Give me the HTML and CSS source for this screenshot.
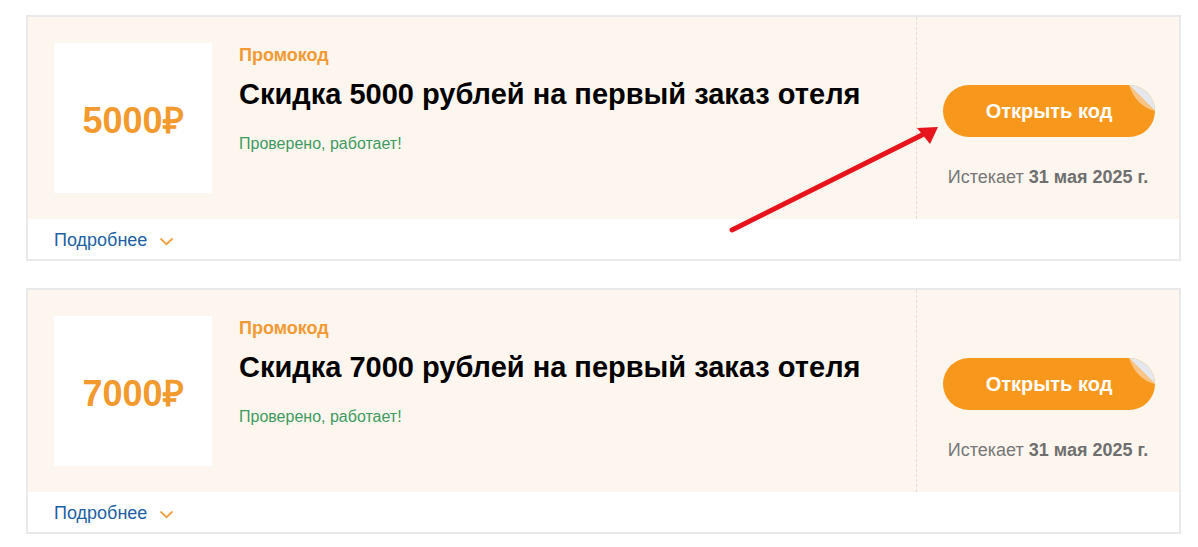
FILE: index.html
```html
<!DOCTYPE html>
<html lang="ru">
<head>
<meta charset="utf-8">
<title>Промокоды</title>
<link rel="stylesheet" href="styles.css">
</head>
<body>
<div class="page">
  <div class="card">
    <div class="card-main">
      <div class="card-info">
        <div class="amount-box"><span class="amount">5000₽</span></div>
        <div class="text-col">
          <div class="label">Промокод</div>
          <h2 class="title">Скидка 5000 рублей на первый заказ отеля</h2>
          <div class="verified">Проверено, работает!</div>
        </div>
      </div>
      <div class="card-action">
        <button class="open-btn">Открыть код
          <svg class="peel" viewBox="0 0 26 26" width="26" height="26">
            <path d="M0,0 A26,26 0 0 1 26,26 Z" fill="#e4e8ec"/>
            <path d="M0,0 L26,26 Q7,21 0,0 Z" fill="#f9c485"/>
          </svg>
        </button>
        <div class="expires">Истекает <b>31 мая 2025 г.</b></div>
      </div>
    </div>
    <div class="card-foot"><span class="more">Подробнее</span>
      <svg class="chev" viewBox="0 0 15 9" width="15" height="9"><path d="M1.5,1.5 L7.5,7.2 L13.5,1.5" fill="none" stroke="#f0a040" stroke-width="1.8"/></svg>
    </div>
  </div>

  <div class="card">
    <div class="card-main">
      <div class="card-info">
        <div class="amount-box"><span class="amount">7000₽</span></div>
        <div class="text-col">
          <div class="label">Промокод</div>
          <h2 class="title">Скидка 7000 рублей на первый заказ отеля</h2>
          <div class="verified">Проверено, работает!</div>
        </div>
      </div>
      <div class="card-action">
        <button class="open-btn">Открыть код
          <svg class="peel" viewBox="0 0 26 26" width="26" height="26">
            <path d="M0,0 A26,26 0 0 1 26,26 Z" fill="#e4e8ec"/>
            <path d="M0,0 L26,26 Q7,21 0,0 Z" fill="#f9c485"/>
          </svg>
        </button>
        <div class="expires">Истекает <b>31 мая 2025 г.</b></div>
      </div>
    </div>
    <div class="card-foot"><span class="more">Подробнее</span>
      <svg class="chev" viewBox="0 0 15 9" width="15" height="9"><path d="M1.5,1.5 L7.5,7.2 L13.5,1.5" fill="none" stroke="#f0a040" stroke-width="1.8"/></svg>
    </div>
  </div>

  <svg class="pointer" width="1198" height="547" viewBox="0 0 1198 547">
    <line x1="732" y1="230" x2="922" y2="135" stroke="#e8141b" stroke-width="5" stroke-linecap="round"/>
    <polygon points="917,128 938,127 930,144" fill="#e8141b"/>
  </svg>
</div>
</body>
</html>
```
FILE: styles.css
```css
* { box-sizing: border-box; }
html, body { margin: 0; padding: 0; background: #fff; }
body { font-family: "Liberation Sans", Arial, sans-serif; }

.page {
  position: relative;
  padding: 15px 0 0 26px;
  width: 1198px;
  height: 547px;
}

.card {
  width: 1155px;
  border: 2px solid #e9e9e9;
  margin-bottom: 27px;
  background: #fff;
}

.card-main {
  display: flex;
  height: 202px;
  background: #fdf6ee;
}

.card-info {
  flex: 1;
  display: flex;
  gap: 27px;
  padding: 26px;
}

.amount-box {
  width: 158px;
  height: 150px;
  background: #fff;
  display: flex;
  align-items: center;
  justify-content: center;
}

.amount {
  color: #f29a2e;
  font-weight: bold;
  font-size: 36px;
  padding-top: 2px;
}

.text-col { padding-top: 2px; }

.label {
  color: #f29a33;
  font-weight: bold;
  font-size: 18px;
  line-height: 20px;
}

.title {
  margin: 12px 0 0;
  color: #000;
  font-size: 29px;
  line-height: 34px;
  font-weight: bold;
}

.verified {
  margin-top: 24px;
  color: #3e9a5f;
  font-size: 16px;
  line-height: 18px;
}

.card-action {
  width: 263px;
  border-left: 1px dashed #e2dcd4;
  display: flex;
  flex-direction: column;
  align-items: center;
  padding-top: 68px;
}

.open-btn {
  position: relative;
  width: 212px;
  height: 52px;
  border: 0;
  border-radius: 26px;
  background: #f7981d;
  color: #fff;
  font-family: "Liberation Sans", Arial, sans-serif;
  font-weight: bold;
  font-size: 20px;
  padding: 0;
  margin-right: -2px;
}

.peel {
  position: absolute;
  top: 0;
  right: 0;
  display: block;
}

.expires {
  margin-top: 30px;
  color: #777;
  font-size: 18px;
  line-height: 20px;
}
.expires b { color: #6f6f6f; }

.card-foot {
  height: 40px;
  display: flex;
  align-items: center;
  gap: 12px;
  padding-left: 26px;
  padding-top: 3px;
}

.more {
  color: #1e5fa3;
  font-size: 18px;
}

.chev { display: block; margin-top: 1px; }

.pointer {
  position: absolute;
  left: 0;
  top: 0;
  pointer-events: none;
}
```
